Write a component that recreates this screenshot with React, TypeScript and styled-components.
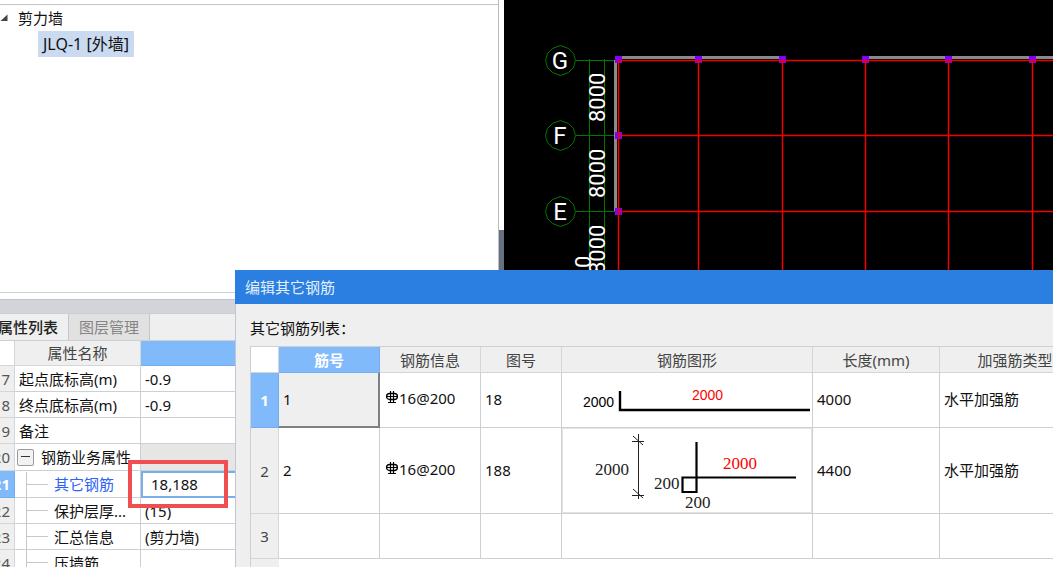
import React from "react";
import styled, { createGlobalStyle, css } from "styled-components";

const LINE = "#ccd0d4";
const FACE = "#efefef";
const SELECT = "#80bafb";
const ACCENT = "#2b7fe1";

const GlobalStyle = createGlobalStyle`
  *, *::before, *::after { box-sizing: border-box; }
  html, body, #root { height: 100%; margin: 0; }
  body {
    overflow: hidden;
    background: #fff;
    color: #111;
    font: 15px/20px "Noto Sans", "Noto Sans CJK SC", sans-serif;
  }
  button, input { font: inherit; color: inherit; margin: 0; }
  h2, h3, p, ul { margin: 0; padding: 0; font-weight: 400; font-size: 15px; }
`;

const Workspace = styled.main`
  position: relative;
  display: flex;
  height: 100%;
  overflow: hidden;
`;

const Sidebar = styled.div`
  display: flex;
  flex-direction: column;
  flex: 0 0 499px;
  min-width: 0;
  border-right: 1px solid #b9bec2;
  overflow: hidden;
`;

const Splitter = styled.div`
  flex: 0 0 5px;
  background: linear-gradient(#fff 230px, #66717d 230px);
`;

const Canvas = styled.section`
  flex: 1;
  min-width: 0;
  background: #000;
  overflow: hidden;
`;

/* component tree */

const TreePanel = styled.nav`
  flex: 0 0 289px;
  margin-top: 4px;
  border-top: 1px solid #c3c6c9;
  border-bottom: 1px solid ${LINE};
`;

const TreeList = styled.ul`
  list-style: none;
`;

const TreeGroup = styled.li`
  display: grid;
  grid-template-columns: 18px 1fr;
  align-items: center;
  height: 26px;
`;

const TreeLeaf = styled.li`
  padding-left: 38px;
`;

const TreeLink = styled.a`
  display: inline-block;
  padding: 3px 5px;
  background: #cadaf0;
  color: inherit;
  font-size: 16px;
  text-decoration: none;
`;

/* property sheet */

const PropertyPanel = styled.section`
  flex: 1;
  min-height: 0;
  margin: 6px 0 0 -12px;
  border-top: 1px solid #bfc3ca;
  background: #d2d4d9;
  padding-top: 13px;
  overflow: hidden;
`;

const Tabs = styled.div`
  display: flex;
  height: 28px;
  background: ${FACE};
  border-top: 1px solid ${LINE};
  border-bottom: 1px solid ${LINE};
`;

const Tab = styled.button<{ $active?: boolean }>`
  width: 81px;
  padding: 0 10px;
  border: 0;
  border-right: 1px solid #c3c7cc;
  background: ${(p) => (p.$active ? FACE : "#e1e1e1")};
  color: ${(p) => (p.$active ? "#222" : "#858585")};
  font-weight: ${(p) => (p.$active ? 500 : 400)};
  white-space: nowrap;
`;

const Sheet = styled.table`
  width: 100%;
  table-layout: fixed;
  border-spacing: 0;
  background: #fff;
`;

const Col = styled.col<{ $w?: number }>`
  ${(p) => p.$w && css`width: ${p.$w}px;`}
`;

const SheetRow = styled.tr<{ $h: number }>`
  height: ${(p) => p.$h}px;
`;

const HeadCell = styled.th<{ $selected?: boolean; $blank?: boolean }>`
  padding: 0;
  border-right: 1px solid ${(p) => (p.$selected ? "#74acee" : "#d4d7da")};
  border-bottom: 1px solid ${(p) => (p.$selected ? "#74acee" : "#d4d7da")};
  background: ${(p) => (p.$blank ? "#fff" : p.$selected ? SELECT : FACE)};
  color: ${(p) => (p.$selected ? "#fff" : "#444")};
  font-weight: ${(p) => (p.$selected ? 700 : 400)};
  text-align: center;
  white-space: nowrap;
`;

const NumberCell = styled(HeadCell)`
  padding-right: 4px;
  text-align: right;
  color: ${(p) => (p.$selected ? "#fff" : "#555")};
`;

const Cell = styled.td<{ $pad?: number; $shade?: boolean }>`
  padding: 0 0 0 ${(p) => p.$pad ?? 4}px;
  border-right: 1px solid ${LINE};
  border-bottom: 1px solid ${LINE};
  background: ${(p) => (p.$shade ? "#e6e6e6" : "#fff")};
  white-space: nowrap;
  overflow: hidden;
`;

const EditCell = styled.td`
  position: relative;
  padding: 0;
  height: 27px;
`;

const EditBox = styled.input`
  display: block;
  width: 100%;
  height: 27px;
  padding: 0 8px 2px;
  border: 2px solid #78aeea;
  background: #fff;
  outline: 0;
`;

const Callout = styled.span`
  position: absolute;
  left: -13px;
  top: -11px;
  width: 100px;
  height: 48px;
  border: 4px solid #ef4f50;
  pointer-events: none;
`;

const NodeLabel = styled.div<{ $blue?: boolean }>`
  display: flex;
  align-items: center;
  height: 25px;
  color: ${(p) => (p.$blue ? "#2c62f5" : "inherit")};
`;

const Collapse = styled.button`
  display: grid;
  place-items: center;
  flex: none;
  width: 17px;
  height: 17px;
  margin: 0 7px 0 -2px;
  padding: 0;
  border: 1px solid #9a9a9a;
  border-radius: 2px;
  background: #f2f2f2;
`;

const Branch = styled.span`
  align-self: stretch;
  flex: none;
  width: 22px;
  margin: 0 6px 0 7px;
  border-left: 1px solid #c4c8cc;
  background: linear-gradient(#c4c8cc, #c4c8cc) 0 50% / 100% 1px no-repeat;
`;

/* rebar dialog */

const Dialog = styled.section`
  position: absolute;
  inset: 270px 0 0 235px;
  display: flex;
  flex-direction: column;
  background: ${FACE};
  overflow: hidden;
`;

const TitleBar = styled.h2`
  flex: none;
  padding: 7px 10px;
  background: ${ACCENT};
  color: #e4effc;
`;

const DialogBody = styled.div`
  flex: 1;
  min-height: 0;
  display: flex;
  flex-direction: column;
  padding: 12px 0 0 14px;
  border-left: 1px solid #bcc7d8;
`;

const Caption = styled.h3`
  flex: none;
  margin-bottom: 6px;
  line-height: 24px;
`;

const GridFrame = styled.div`
  flex: 1;
  min-height: 0;
  border-top: 1px solid ${LINE};
  border-left: 1px solid ${LINE};
  background: linear-gradient(90deg, ${FACE} 28px, #fff 28px);
  overflow: hidden;
`;

const RebarGrid = styled(Sheet)`
  width: 840px;
  min-width: 100%;
`;

const RebarCell = styled(Cell)`
  padding-bottom: 2px;
`;

const ShapeCell = styled(Cell)`
  padding: 0;
`;

const CurrentCell = styled(RebarCell)`
  background: ${FACE};
  border-right: 2px solid #808080;
  border-bottom: 2px solid #808080;
`;

const Spec = styled.span`
  display: flex;
  align-items: center;
  gap: 1px;
  padding-bottom: 2px;
`;

const Shape = styled.svg`
  display: block;
`;

function Steel() {
  return (
    <svg width="12" height="16" viewBox="0 0 12 16" fill="none" stroke="#000" aria-hidden="true">
      <path d="M4.5 1V13M7.5 1V13" strokeWidth="1.2" />
      <path d="M2 12.5H10M1 6.5H11" />
      <rect x=".6" y="3.5" width="10.8" height="6" rx="3" strokeWidth="1.3" />
    </svg>
  );
}

function LShape() {
  return (
    <Shape width="250" height="54" fontFamily="Liberation Sans, sans-serif" fontSize="14">
      <path d="M58 18V37H248" fill="none" stroke="#000" strokeWidth="2.4" />
      <text x="21" y="34">2000</text>
      <text x="130" y="27" fill="#f00">2000</text>
    </Shape>
  );
}

function HookShape() {
  return (
    <Shape
      width="250"
      height="85"
      fontFamily="Liberation Serif, serif"
      fontSize="17"
      fill="#222"
    >
      <rect x=".5" y=".5" width="249" height="84" fill="none" stroke="#e4e3de" />
      <path
        d="M76.5 6V71M70 13.5H82M70 67.5H82M71 8L81 17M71 61L81 70"
        fill="none"
        stroke="#222"
      />
      <path
        d="M134.5 14V64H120.5V49.5H234"
        fill="none"
        stroke="#000"
        strokeWidth="2.2"
      />
      <text x="33" y="47">2000</text>
      <text x="92" y="61">200</text>
      <text x="123" y="80">200</text>
      <text x="161" y="41" fill="#f00">2000</text>
    </Shape>
  );
}

const AXES = [
  { name: "G", y: 60 },
  { name: "F", y: 135 },
  { name: "E", y: 211 },
];
const COLUMNS = [114, 194, 278, 361, 444, 528];
const OCTAGON = "0,-15 8,-12 13,-7 15,0 13,7 8,12 0,15 -8,12 -13,7 -15,0 -13,-7 -8,-12";

function AxisGrid() {
  return (
    <Shape width="100%" height="100%" fontFamily="Roboto, sans-serif" aria-label="轴网">
      <g stroke="#007800" fill="none">
        <path d="M85.5 59V600M100.5 59V600" />
        {AXES.map((a) => (
          <g key={a.name}>
            <path d={`M72 ${a.y + 0.5}H112`} />
            <polygon points={OCTAGON} transform={`translate(56.5 ${a.y + 0.5})`} />
          </g>
        ))}
      </g>
      <path d="M111.5 60V211M114 57.5H278M362 57.5H2000" stroke="#8a8a8a" strokeWidth="3" />
      <g fill="#8000ff">
        {COLUMNS.map((x) => (
          <rect key={x} x={x - 3} y="56" width="7" height="7" />
        ))}
        <rect x="111" y="132" width="7" height="7" />
        <rect x="111" y="208" width="7" height="7" />
      </g>
      <g stroke="#f00000" strokeWidth="1.5" fill="none">
        {AXES.map((a) => (
          <path key={a.name} d={`M114 ${a.y + 0.5}H2000`} />
        ))}
        {COLUMNS.map((x) => (
          <path key={x} d={`M${x + 0.5} 60V600`} />
        ))}
      </g>
      <g fill="#fff">
        {AXES.map((a) => (
          <text key={a.name} x="56" y={a.y + 9} fontSize="24" textAnchor="middle">
            {a.name}
          </text>
        ))}
        {[122, 198, 274].map((y) => (
          <text key={y} transform={`translate(101 ${y}) rotate(-90)`} fontSize="22">
            8000
          </text>
        ))}
        <text transform="translate(87 268) rotate(-90)" fontSize="22">0</text>
      </g>
    </Shape>
  );
}

function PropertySheet() {
  return (
    <Sheet>
      <colgroup>
        <Col $w={27} />
        <Col $w={126} />
        <Col />
      </colgroup>
      <thead>
        <SheetRow $h={25}>
          <HeadCell $blank />
          <HeadCell>属性名称</HeadCell>
          <HeadCell $selected aria-label="属性值" />
        </SheetRow>
      </thead>
      <tbody>
        <SheetRow $h={26}>
          <NumberCell>7</NumberCell>
          <Cell>起点底标高(m)</Cell>
          <Cell>-0.9</Cell>
        </SheetRow>
        <SheetRow $h={26}>
          <NumberCell>8</NumberCell>
          <Cell>终点底标高(m)</Cell>
          <Cell>-0.9</Cell>
        </SheetRow>
        <SheetRow $h={26}>
          <NumberCell>9</NumberCell>
          <Cell>备注</Cell>
          <Cell />
        </SheetRow>
        <SheetRow $h={27}>
          <NumberCell>20</NumberCell>
          <Cell>
            <NodeLabel>
              <Collapse aria-label="折叠">
                <svg width="9" height="2" aria-hidden="true">
                  <rect width="9" height="1" fill="#333" />
                </svg>
              </Collapse>
              钢筋业务属性
            </NodeLabel>
          </Cell>
          <Cell $shade />
        </SheetRow>
        <SheetRow $h={27}>
          <NumberCell $selected>21</NumberCell>
          <Cell>
            <NodeLabel $blue as="label" htmlFor="other-rebar">
              <Branch />
              其它钢筋
            </NodeLabel>
          </Cell>
          <EditCell>
            <EditBox id="other-rebar" defaultValue="18,188" />
            <Callout />
          </EditCell>
        </SheetRow>
        {[
          ["22", "保护层厚...", "(15)"],
          ["23", "汇总信息", "(剪力墙)"],
          ["24", "压墙筋", ""],
        ].map(([no, name, value]) => (
          <SheetRow key={no} $h={26}>
            <NumberCell>{no}</NumberCell>
            <Cell>
              <NodeLabel>
                <Branch />
                {name}
              </NodeLabel>
            </Cell>
            <Cell>{value}</Cell>
          </SheetRow>
        ))}
      </tbody>
    </Sheet>
  );
}

function RebarTable() {
  return (
    <RebarGrid>
      <colgroup>
        <Col $w={28} />
        <Col $w={101} />
        <Col $w={101} />
        <Col $w={81} />
        <Col $w={251} />
        <Col $w={127} />
        <Col $w={151} />
      </colgroup>
      <thead>
        <SheetRow $h={26}>
          <HeadCell $blank />
          <HeadCell $selected>筋号</HeadCell>
          <HeadCell>钢筋信息</HeadCell>
          <HeadCell>图号</HeadCell>
          <HeadCell>钢筋图形</HeadCell>
          <HeadCell>长度(mm)</HeadCell>
          <HeadCell>加强筋类型</HeadCell>
        </SheetRow>
      </thead>
      <tbody>
        <SheetRow $h={55}>
          <HeadCell $selected>1</HeadCell>
          <CurrentCell>1</CurrentCell>
          <RebarCell $pad={6}>
            <Spec>
              <Steel />
              16@200
            </Spec>
          </RebarCell>
          <RebarCell>18</RebarCell>
          <ShapeCell>
            <LShape />
          </ShapeCell>
          <RebarCell>4000</RebarCell>
          <RebarCell>水平加强筋</RebarCell>
        </SheetRow>
        <SheetRow $h={86}>
          <HeadCell>2</HeadCell>
          <RebarCell>2</RebarCell>
          <RebarCell $pad={6}>
            <Spec>
              <Steel />
              16@200
            </Spec>
          </RebarCell>
          <RebarCell>188</RebarCell>
          <ShapeCell>
            <HookShape />
          </ShapeCell>
          <RebarCell>4400</RebarCell>
          <RebarCell>水平加强筋</RebarCell>
        </SheetRow>
        <SheetRow $h={45}>
          <HeadCell>3</HeadCell>
          <RebarCell />
          <RebarCell />
          <RebarCell />
          <RebarCell />
          <RebarCell />
          <RebarCell />
        </SheetRow>
      </tbody>
    </RebarGrid>
  );
}

export default function App() {
  return (
    <>
      <GlobalStyle />
      <Workspace>
        <Sidebar>
          <TreePanel>
            <TreeList>
              <TreeGroup>
                <svg width="8" height="8" aria-hidden="true">
                  <path d="M7.5 .5V7H.5Z" fill="#444" />
                </svg>
                剪力墙
              </TreeGroup>
              <TreeLeaf>
                <TreeLink href="#jlq-1">JLQ-1 [外墙]</TreeLink>
              </TreeLeaf>
            </TreeList>
          </TreePanel>
          <PropertyPanel>
            <Tabs role="tablist">
              <Tab role="tab" aria-selected="true" $active>属性列表</Tab>
              <Tab role="tab" aria-selected="false">图层管理</Tab>
            </Tabs>
            <PropertySheet />
          </PropertyPanel>
        </Sidebar>
        <Splitter />
        <Canvas>
          <AxisGrid />
        </Canvas>
        <Dialog role="dialog" aria-labelledby="dialog-title">
          <TitleBar id="dialog-title">编辑其它钢筋</TitleBar>
          <DialogBody>
            <Caption>其它钢筋列表：</Caption>
            <GridFrame>
              <RebarTable />
            </GridFrame>
          </DialogBody>
        </Dialog>
      </Workspace>
    </>
  );
}
